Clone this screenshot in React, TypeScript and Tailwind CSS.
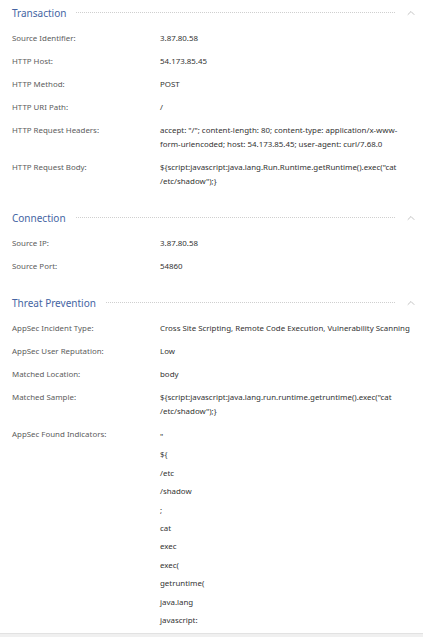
import { ChevronUp } from 'lucide-react';

type Row = { label: string; value: string | string[] };

const sections: { title: string; rows: Row[] }[] = [
  {
    title: 'Transaction',
    rows: [
      { label: 'Source Identifier:', value: '3.87.80.58' },
      { label: 'HTTP Host:', value: '54.173.85.45' },
      { label: 'HTTP Method:', value: 'POST' },
      { label: 'HTTP URI Path:', value: '/' },
      {
        label: 'HTTP Request Headers:',
        value:
          'accept: "/"; content-length: 80; content-type: application/x-www-form-urlencoded; host: 54.173.85.45; user-agent: curl/7.68.0',
      },
      {
        label: 'HTTP Request Body:',
        value: '${script:javascript:java.lang.Run.Runtime.getRuntime().exec("cat /etc/shadow");}',
      },
    ],
  },
  {
    title: 'Connection',
    rows: [
      { label: 'Source IP:', value: '3.87.80.58' },
      { label: 'Source Port:', value: '54860' },
    ],
  },
  {
    title: 'Threat Prevention',
    rows: [
      {
        label: 'AppSec Incident Type:',
        value: 'Cross Site Scripting, Remote Code Execution, Vulnerability Scanning',
      },
      { label: 'AppSec User Reputation:', value: 'Low' },
      { label: 'Matched Location:', value: 'body' },
      {
        label: 'Matched Sample:',
        value: '${script:javascript:java.lang.run.runtime.getruntime().exec("cat /etc/shadow");}',
      },
      {
        label: 'AppSec Found Indicators:',
        value: ['"', '${', '/etc', '/shadow', ';', 'cat', 'exec', 'exec(', 'getruntime(', 'java.lang', 'javascript:'],
      },
    ],
  },
];

const Section = ({ title, rows, last }: { title: string; rows: Row[]; last?: boolean }) => (
  <section className={last ? 'pb-[6px]' : 'pb-[17px]'}>
    {/* Header */}
    <div className="h-[25px] flex items-center pl-[12px] pr-[6px] gap-[10px]">
      <h3 className="text-[10px] text-[#4565a3] leading-none whitespace-nowrap">{title}</h3>
      <div className="flex-1 border-t border-dotted border-[#cfcfcf]" />
      <ChevronUp size={12} strokeWidth={1.2} className="text-[#9a9a9a]" />
    </div>

    {/* Rows */}
    <div className="pt-[6px] flex flex-col gap-[9px]">
      {rows.map((row) => (
        <div key={row.label} className="flex text-[7.9px] leading-[14px]">
          <div className="w-[160px] shrink-0 pl-[12px] text-[#5c5c5c]">{row.label}</div>
          <div className="flex-1 pr-[9px] text-[#333] break-words">
            {Array.isArray(row.value) ? (
              <div className="flex flex-col">
                {row.value.map((v) => (
                  <span key={v} className="leading-[18.4px]">
                    {v}
                  </span>
                ))}
              </div>
            ) : (
              row.value
            )}
          </div>
        </div>
      ))}
    </div>
  </section>
);

export default function App() {
  return (
    <div className="w-[423px] h-[637px] bg-[#f0f0f0] overflow-hidden" style={{ fontFamily: '"Noto Sans", "Open Sans", sans-serif' }}>
      <div className="h-[634px] bg-white border-b border-[#e2e2e2] overflow-hidden">
        {sections.map((s, i) => (
          <Section key={s.title} title={s.title} rows={s.rows} last={i === sections.length - 1} />
        ))}
      </div>
    </div>
  );
}
